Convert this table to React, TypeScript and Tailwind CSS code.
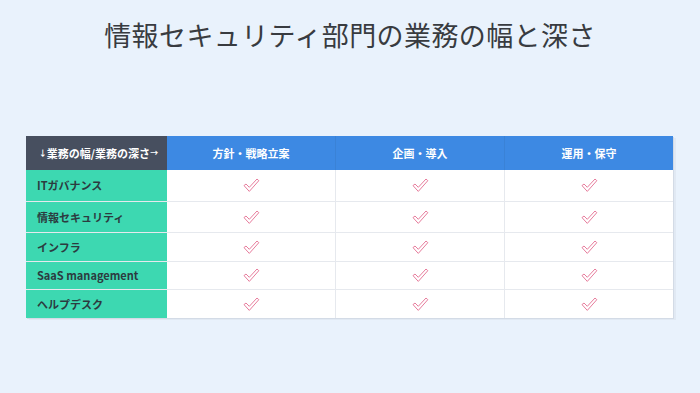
const font = { fontFamily: '"Noto Sans CJK JP", "Noto Sans", sans-serif' };

const columns = ["方針・戦略立案", "企画・導入", "運用・保守"];

const rows = [
  { label: "ITガバナンス", h: "h-[31px]" },
  { label: "情報セキュリティ", h: "h-[31px]" },
  { label: "インフラ", h: "h-[29px]" },
  { label: "SaaS management", h: "h-[28px]" },
  { label: "ヘルプデスク", h: "h-[29px]" },
];

const Check = () => (
  <svg width="17" height="15" viewBox="0 0 17 15" fill="none">
    <path
      d="M1 7.6 L3 6 L6.3 9.3 L14 1 L15.8 2.7 L6.3 13.4 Z"
      stroke="#e77c9c"
      strokeWidth="1"
      strokeLinejoin="round"
      fill="#fff"
    />
  </svg>
);

export default function App() {
  return (
    <div className="w-[700px] h-[393px] bg-[#e9f2fc] flex flex-col items-center" style={font}>
      <h1 className="pt-[21px] text-[27px] leading-none font-normal text-[#383b40] tracking-[0.4px]">
        情報セキュリティ部門の業務の幅と深さ
      </h1>

      <div className="mt-[88px] w-[647px] self-start ml-[26px] bg-white shadow-[1px_1px_0_#d3dbe6,3px_2px_0_#e1e9f3]">
        <div className="flex h-[34px] text-white text-[11px] font-bold">
          <div className="w-[141px] bg-[#474f5f] flex items-center justify-center pl-[4px]">
            <span className="text-[8px]">↓</span>業務の幅/業務の深さ<span className="text-[8px]">→</span>
          </div>
          {columns.map((c, i) => (
            <div
              key={c}
              className={`flex-1 bg-[#3d89e3] flex items-center justify-center ${i > 0 ? "border-l border-[#3a82d6]" : ""}`}
            >
              {c}
            </div>
          ))}
        </div>
        {rows.map((r, ri) => (
          <div key={r.label} className={`flex ${r.h} ${ri > 0 ? "border-t border-[#e6e9ee]" : ""}`}>
            <div className="w-[141px] bg-[#3dd8b1] flex items-center pl-[11px] text-[11px] font-bold text-[#2c3b40]">
              {r.label}
            </div>
            {columns.map((c, i) => (
              <div
                key={c}
                className={`flex-1 flex items-center justify-center ${i > 0 ? "border-l border-[#e6e9ee]" : ""}`}
              >
                <Check />
              </div>
            ))}
          </div>
        ))}
      </div>
    </div>
  );
}
